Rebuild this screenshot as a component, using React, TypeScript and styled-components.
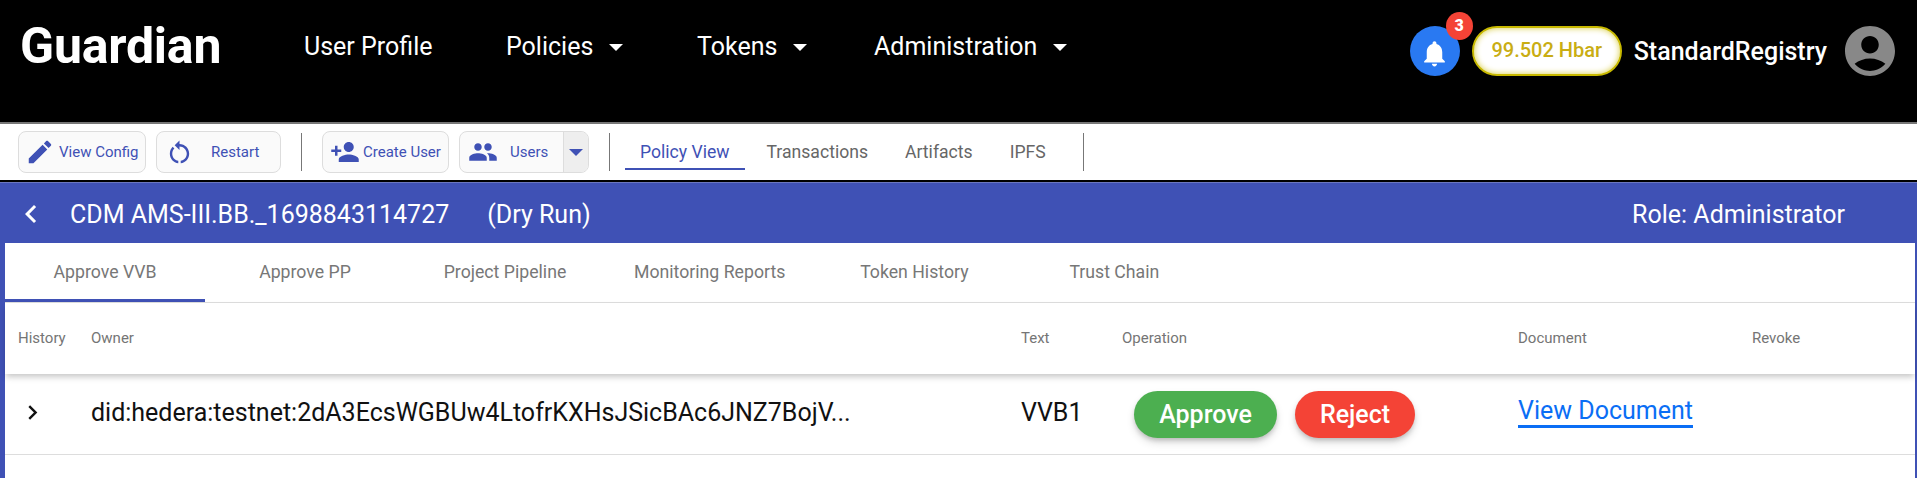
import React from 'react';
import styled, { createGlobalStyle } from 'styled-components';

const GlobalStyle = createGlobalStyle`
  html, body {
    margin: 0;
    padding: 0;
    background: #fff;
    overflow: hidden;
  }
  body {
    font-family: Roboto, "Liberation Sans", sans-serif;
  }
`;

const BLUE = '#3f51b5';

const Header = styled.header`
  height: 122px;
  background: #000;
  border-bottom: 2px solid #777;
  display: flex;
  align-items: flex-start;
  color: #fff;
`;

const Logo = styled.div`
  margin: 17px 0 0 20px;
  width: 284px;
  font-size: 50px;
  line-height: 58px;
  font-weight: 700;
  letter-spacing: -0.2px;
`;

const NavItem = styled.div<{ $width: number }>`
  width: ${(p) => p.$width}px;
  margin-top: 32px;
  font-size: 25px;
  line-height: 30px;
  display: flex;
  align-items: center;
`;

const Caret = styled.span`
  margin-left: 16px;
  width: 0;
  height: 0;
  border-left: 7px solid transparent;
  border-right: 7px solid transparent;
  border-top: 7px solid #fff;
`;

const HeaderRight = styled.div`
  margin-left: auto;
  margin-top: 21px;
  margin-right: 17px;
  display: flex;
  align-items: center;
`;

const BellWrap = styled.div`
  position: relative;
  box-sizing: border-box;
  width: 50px;
  height: 50px;
  padding-top: 5px;
  border-radius: 50%;
  background: #2979f2;
  display: flex;
  align-items: center;
  justify-content: center;
  margin-right: 12px;
`;

const Badge = styled.span`
  position: absolute;
  top: -14px;
  right: -13px;
  width: 27px;
  height: 28px;
  border-radius: 50%;
  background: #f44336;
  color: #fff;
  font-size: 16px;
  font-weight: 900;
  line-height: 28px;
  text-align: center;
`;

const Balance = styled.div`
  box-sizing: border-box;
  width: 150px;
  height: 50px;
  border-radius: 25px;
  background: #fff;
  border: 2px solid #c8b900;
  box-shadow: inset 0 0 6px #d8cc40;
  color: #c9ad14;
  font-size: 20px;
  font-weight: 500;
  line-height: 44px;
  text-align: center;
`;

const UserName = styled.div`
  margin: 0 13px 0 12px;
  font-size: 25px;
  font-weight: 500;
`;

const Toolbar = styled.div`
  box-sizing: border-box;
  height: 58px;
  padding: 7px 0 0 18px;
  border-bottom: 1px solid #000;
  background: #fff;
  display: flex;
  align-items: flex-start;
  box-shadow: inset 0 -1px 0 #000;
`;

const ToolButton = styled.div<{ $width: number; $pad: number }>`
  box-sizing: border-box;
  width: ${(p) => p.$width}px;
  height: 42px;
  margin-right: 10px;
  padding-left: ${(p) => p.$pad}px;
  display: flex;
  align-items: center;
  background: #fafafa;
  border: 1px solid #ddd;
  border-radius: 8px;
  color: ${BLUE};
  font-size: 15px;
  overflow: hidden;
`;

const ButtonLabel = styled.span<{ $left: number }>`
  margin-left: ${(p) => p.$left}px;
  white-space: nowrap;
`;

const SplitArrow = styled.span`
  margin-left: auto;
  width: 24px;
  align-self: stretch;
  background: #eee;
  border-left: 1px solid #ddd;
  display: flex;
  align-items: center;
  justify-content: center;
  &::after {
    content: '';
    border-left: 7px solid transparent;
    border-right: 7px solid transparent;
    border-top: 7px solid ${BLUE};
  }
`;

const Separator = styled.span<{ $left: number; $right: number }>`
  width: 1px;
  height: 38px;
  margin: 2px ${(p) => p.$right}px 0 ${(p) => p.$left}px;
  background: #777;
`;

const ToolTab = styled.div<{ $active?: boolean }>`
  box-sizing: border-box;
  height: 39px;
  padding: 0 15px;
  margin-right: 7px;
  font-size: 17.6px;
  line-height: 42px;
  color: ${(p) => (p.$active ? BLUE : '#666')};
  border-bottom: 2px solid ${(p) => (p.$active ? BLUE : 'transparent')};
`;

const TitleBar = styled.div`
  box-sizing: border-box;
  height: 61px;
  border-top: 1px solid #6b77c0;
  background: ${BLUE};
  color: #fff;
  display: flex;
  align-items: center;
  font-size: 25px;
  padding: 2px 72px 0 13px;
`;

const PolicyName = styled.span`
  margin-left: 21px;
`;

const DryRun = styled.span`
  margin-left: 38px;
`;

const Role = styled.span`
  margin-left: auto;
`;

const Content = styled.main`
  height: 235px;
  background: #fff;
  border-left: 5px solid ${BLUE};
  border-right: 2px solid ${BLUE};
`;

const PolicyTabs = styled.div`
  display: flex;
  height: 59px;
  border-bottom: 1px solid #ddd;
`;

const PolicyTab = styled.div<{ $active?: boolean }>`
  box-sizing: border-box;
  min-width: 200px;
  padding: 0 29px;
  height: 59px;
  font-size: 17.7px;
  line-height: 58px;
  text-align: center;
  color: #777;
  border-bottom: 3px solid ${(p) => (p.$active ? BLUE : 'transparent')};
`;

const columns = '73px 930px 101px 396px 234px 1fr';

const TableHead = styled.div`
  position: relative;
  display: grid;
  grid-template-columns: ${columns};
  align-items: center;
  height: 71px;
  padding: 0 0 1px 13px;
  box-sizing: border-box;
  color: #757575;
  font-size: 15px;
  box-shadow: 0 4px 6px -1px rgba(0, 0, 0, 0.22);
`;

const TableRow = styled.div`
  box-sizing: border-box;
  display: grid;
  grid-template-columns: ${columns};
  align-items: center;
  height: 81px;
  padding: 0 0 3px 13px;
  border-bottom: 1px solid #ddd;
  color: #111;
  font-size: 25px;
`;

const Operations = styled.div`
  display: flex;
  gap: 18px;
  margin-top: 3px;
  padding-left: 12px;
`;

const OpButton = styled.div<{ $color: string; $width: number }>`
  width: ${(p) => p.$width}px;
  height: 47px;
  border-radius: 24px;
  background: ${(p) => p.$color};
  color: #fff;
  font-size: 25px;
  font-weight: 500;
  line-height: 48px;
  text-align: center;
  box-shadow: 0 3px 5px -1px rgba(0, 0, 0, 0.2), 0 5px 8px rgba(0, 0, 0, 0.12);
`;

const DocLink = styled.div`
  justify-self: start;
  color: #0a6ef5;
  font-size: 25px;
  line-height: 28px;
  border-bottom: 3px solid #0a6ef5;
`;

const Icon: React.FC<{ d: string; size: number; color: string }> = ({ d, size, color }) => (
  <svg width={size} height={size} viewBox="0 0 24 24" fill={color}>
    <path d={d} />
  </svg>
);

const icons = {
  edit: 'M3 17.25V21h3.75L17.81 9.94l-3.75-3.75L3 17.25zM20.71 7.04c.39-.39.39-1.02 0-1.41l-2.34-2.34c-.39-.39-1.02-.39-1.41 0l-1.83 1.83 3.75 3.75 1.83-1.83z',
  restart: 'M12 5V2L8 6l4 4V7c3.31 0 6 2.69 6 6 0 2.97-2.17 5.43-5 5.91v2.02c3.95-.49 7-3.85 7-7.93 0-4.42-3.58-8-8-8zm-6 8c0-1.65.67-3.15 1.76-4.24L6.34 7.34C4.9 8.79 4 10.79 4 13c0 4.08 3.05 7.44 7 7.93v-2.02c-2.83-.48-5-2.94-5-5.91z',
  personAdd: 'M15 12c2.21 0 4-1.79 4-4s-1.79-4-4-4-4 1.79-4 4 1.79 4 4 4zm-9-2V7H4v3H1v2h3v3h2v-3h3v-2H6zm9 4c-2.67 0-8 1.34-8 4v2h16v-2c0-2.66-5.33-4-8-4z',
  people: 'M16 11c1.66 0 2.99-1.34 2.99-3S17.66 5 16 5c-1.66 0-3 1.34-3 3s1.34 3 3 3zm-8 0c1.66 0 2.99-1.34 2.99-3S9.66 5 8 5C6.34 5 5 6.34 5 8s1.34 3 3 3zm0 2c-2.33 0-7 1.17-7 3.5V19h14v-2.5c0-2.33-4.67-3.5-7-3.5zm8 0c-.29 0-.62.02-.97.05 1.16.84 1.97 1.97 1.97 3.45V19h6v-2.5c0-2.33-4.67-3.5-7-3.5z',
  bell: 'M12 22c1.1 0 2-.9 2-2h-4c0 1.1.89 2 2 2zm6-6v-5c0-3.07-1.64-5.64-4.5-6.32V4c0-.83-.67-1.5-1.5-1.5s-1.5.67-1.5 1.5v.68C7.63 5.36 6 7.92 6 11v5l-2 2v1h16v-1l-2-2z',
  account: 'M12 2C6.48 2 2 6.48 2 12s4.48 10 10 10 10-4.48 10-10S17.52 2 12 2zm0 4c1.93 0 3.5 1.57 3.5 3.5S13.93 13 12 13s-3.5-1.57-3.5-3.5S10.07 6 12 6zm0 14c-2.03 0-4.43-.82-6.14-2.88C7.55 15.8 9.68 15 12 15s4.45.8 6.14 2.12C16.43 19.18 14.03 20 12 20z',
  back: 'M15.41 7.41 14 6l-6 6 6 6 1.41-1.41L10.83 12z',
  forward: 'M8.59 16.59 10 18l6-6-6-6-1.41 1.41L13.17 12z',
};

const navItems = [
  { label: 'User Profile', width: 202 },
  { label: 'Policies', width: 191, caret: true },
  { label: 'Tokens', width: 177, caret: true },
  { label: 'Administration', width: 300, caret: true },
];

const policyTabs = ['Approve VVB', 'Approve PP', 'Project Pipeline', 'Monitoring Reports', 'Token History', 'Trust Chain'];

export default function App() {
  return (
    <>
      <GlobalStyle />
      <Header>
        <Logo>Guardian</Logo>
        {navItems.map((item) => (
          <NavItem key={item.label} $width={item.width}>
            {item.label}
            {item.caret ? <Caret /> : null}
          </NavItem>
        ))}
        <HeaderRight>
          <BellWrap>
            <Icon d={icons.bell} size={31} color="#fff" />
            <Badge>3</Badge>
          </BellWrap>
          <Balance>99.502 Hbar</Balance>
          <UserName>StandardRegistry</UserName>
          <Icon d={icons.account} size={60} color="#888" />
        </HeaderRight>
      </Header>
      <Toolbar>
        <ToolButton $width={128} $pad={6}>
          <Icon d={icons.edit} size={30} color={BLUE} />
          <ButtonLabel $left={4}>View Config</ButtonLabel>
        </ToolButton>
        <ToolButton $width={125} $pad={8}>
          <Icon d={icons.restart} size={29} color={BLUE} />
          <ButtonLabel $left={17}>Restart</ButtonLabel>
        </ToolButton>
        <Separator $left={10} $right={20} />
        <ToolButton $width={127} $pad={7}>
          <Icon d={icons.personAdd} size={30} color={BLUE} />
          <ButtonLabel $left={3}>Create User</ButtonLabel>
        </ToolButton>
        <ToolButton $width={130} $pad={8}>
          <Icon d={icons.people} size={30} color={BLUE} />
          <ButtonLabel $left={12}>Users</ButtonLabel>
          <SplitArrow />
        </ToolButton>
        <Separator $left={10} $right={15} />
        <ToolTab $active>Policy View</ToolTab>
        <ToolTab>Transactions</ToolTab>
        <ToolTab>Artifacts</ToolTab>
        <ToolTab>IPFS</ToolTab>
        <Separator $left={15} $right={0} />
      </Toolbar>
      <TitleBar>
        <Icon d={icons.back} size={36} color="#fff" />
        <PolicyName>CDM AMS-III.BB._1698843114727</PolicyName>
        <DryRun>(Dry Run)</DryRun>
        <Role>Role: Administrator</Role>
      </TitleBar>
      <Content>
        <PolicyTabs>
          {policyTabs.map((tab, i) => (
            <PolicyTab key={tab} $active={i === 0}>
              {tab}
            </PolicyTab>
          ))}
        </PolicyTabs>
        <TableHead>
          <span>History</span>
          <span>Owner</span>
          <span>Text</span>
          <span>Operation</span>
          <span>Document</span>
          <span>Revoke</span>
        </TableHead>
        <TableRow>
          <Icon d={icons.forward} size={29} color="#111" />
          <span>did:hedera:testnet:2dA3EcsWGBUw4LtofrKXHsJSicBAc6JNZ7BojV...</span>
          <span>VVB1</span>
          <Operations>
            <OpButton $color="#4caf50" $width={143}>Approve</OpButton>
            <OpButton $color="#f44336" $width={120}>Reject</OpButton>
          </Operations>
          <DocLink>View Document</DocLink>
          <span />
        </TableRow>
      </Content>
    </>
  );
}
